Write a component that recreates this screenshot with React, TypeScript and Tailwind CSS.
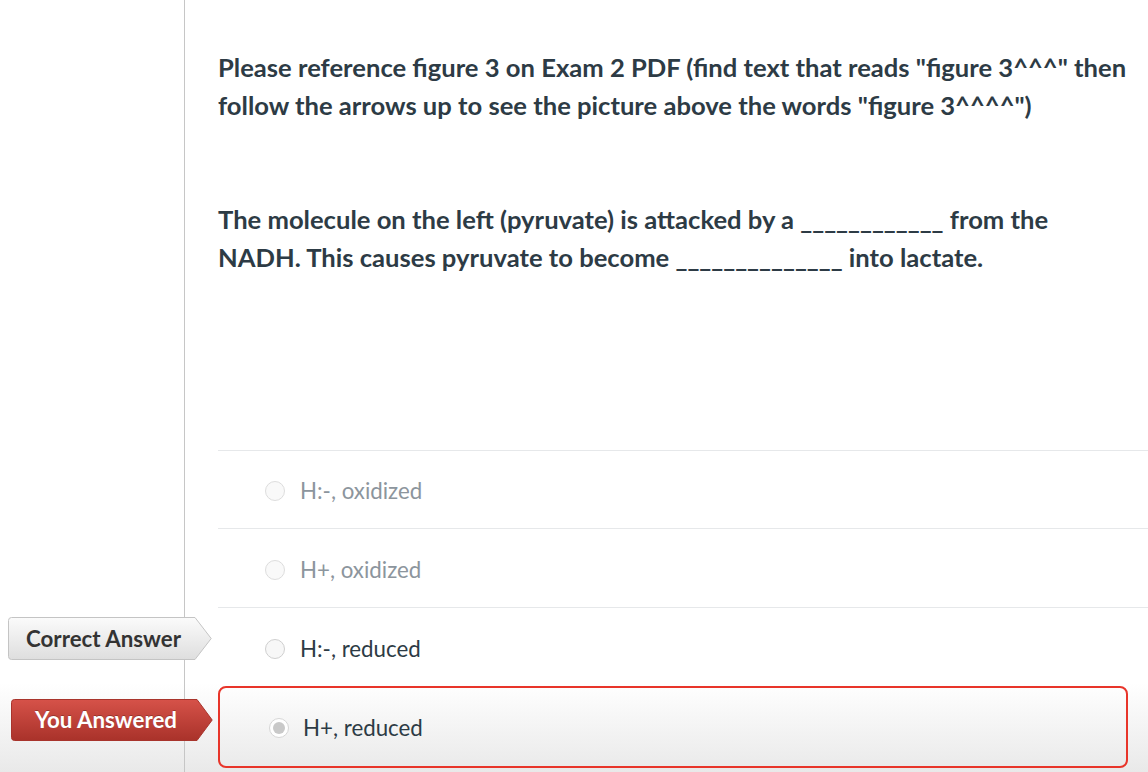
import React from "react";

const font = { fontFamily: "Lato, 'Noto Sans', 'Liberation Sans', sans-serif" };

function Radio({ faded }: { faded?: boolean }) {
  return (
    <div
      className={`w-[20px] h-[20px] rounded-full border border-[#cfcfcf] bg-[#f7f7f7] shrink-0 ${faded ? "opacity-70" : ""}`}
    />
  );
}

function Label({
  text,
  variant,
}: {
  text: string;
  variant: "correct" | "wrong";
}) {
  const correct = variant === "correct";
  const w = correct ? 204 : 202;
  const h = correct ? 43 : 42;
  const body = correct ? 187 : 186;
  const id = correct ? "gc" : "gw";
  return (
    <div className="relative" style={{ width: w, height: h }}>
      <svg width={w} height={h} className="absolute inset-0" viewBox={`0 0 ${w} ${h}`}>
        <defs>
          <linearGradient id={id} x1="0" y1="0" x2="0" y2="1">
            {correct ? (
              <>
                <stop offset="0" stopColor="#fbfbfb" />
                <stop offset="1" stopColor="#dedede" />
              </>
            ) : (
              <>
                <stop offset="0" stopColor="#d65249" />
                <stop offset="1" stopColor="#a9322a" />
              </>
            )}
          </linearGradient>
        </defs>
        <path
          d={`M3.5 0.5 L${body} 0.5 L${w - 0.8} ${h / 2} L${body} ${h - 0.5} L3.5 ${h - 0.5} Q0.5 ${h - 0.5} 0.5 ${h - 3.5} L0.5 3.5 Q0.5 0.5 3.5 0.5 Z`}
          fill={`url(#${id})`}
          stroke={correct ? "#c4c4c4" : "#a8342c"}
          strokeWidth="1"
        />
      </svg>
      <div
        className={`relative flex items-center h-full text-[22.3px] font-bold ${correct ? "text-[#333333] pl-[18px]" : "text-white pl-[24px] [text-shadow:0_-1px_0_rgba(0,0,0,0.25)]"}`}
        style={font}
      >
        {text}
      </div>
    </div>
  );
}

export default function App() {
  return (
    <div className="w-[1148px] h-[772px] bg-white overflow-hidden text-[#2d3b45]" style={font}>
      {/* Question */}
      <div className="flex h-[450px]">
        <div className="w-[185px] shrink-0 border-r border-[#c6c6c6]" />
        <div className="flex-1 pl-[33px] pt-[49px] text-[25.6px] font-bold leading-[37.5px]">
          <p className="whitespace-nowrap">
            Please reference figure 3 on Exam 2 PDF (find text that reads "figure 3^^^" then
            <br />
            follow the arrows up to see the picture above the words "figure 3^^^^")
          </p>
          <p className="whitespace-nowrap mt-[77px]">
            The molecule on the left (pyruvate) is attacked by a ____________ from the
            <br />
            NADH. This causes pyruvate to become ______________ into lactate.
          </p>
        </div>
      </div>

      {/* Answer 1 */}
      <div className="flex h-[78px]">
        <div className="w-[185px] shrink-0 border-r border-[#c6c6c6]" />
        <div className="flex-1 ml-[33px] border-t border-[#e6e8ea] flex items-start pl-[47px] pt-[30px] gap-[15px]">
          <Radio faded />
          <span className="text-[22.3px] leading-[26px] -mt-[3px] text-[#8c959d]">H:-, oxidized</span>
        </div>
      </div>

      {/* Answer 2 */}
      <div className="flex h-[79px]">
        <div className="w-[185px] shrink-0 border-r border-[#c6c6c6]" />
        <div className="flex-1 ml-[33px] border-t border-[#e6e8ea] flex items-start pl-[47px] pt-[31px] gap-[15px]">
          <Radio faded />
          <span className="text-[22.3px] leading-[26px] -mt-[3px] text-[#8c959d]">H+, oxidized</span>
        </div>
      </div>

      {/* Answer 3 - correct */}
      <div className="flex h-[76px]">
        <div className="w-[185px] shrink-0 border-r border-[#c6c6c6] pt-[10px] pl-[8px]">
          <Label text="Correct Answer" variant="correct" />
        </div>
        <div className="flex-1 ml-[33px] border-t border-[#e6e8ea] flex items-start pl-[47px] pt-[31px] gap-[15px]">
          <Radio />
          <span className="text-[22.3px] leading-[26px] -mt-[3px] text-[#2d3b45]">H:-, reduced</span>
        </div>
      </div>

      {/* Answer 4 - you answered */}
      <div className="flex h-[89px] bg-gradient-to-b from-white to-[#e9e9e9]">
        <div className="w-[185px] shrink-0 border-r border-[#c6c6c6] pt-[16px] pl-[11px]">
          <Label text="You Answered" variant="wrong" />
        </div>
        <div className="flex-1 ml-[33px] mr-[20px] pt-[3px]">
          <div className="h-[82px] rounded-[8px] border-2 border-[#e8352a] flex items-start pl-[49px] pt-[30px] gap-[14px]">
            <div className="w-[20px] h-[20px] rounded-full border border-[#d6d6d6] bg-white flex items-center justify-center shrink-0">
              <div className="w-[12px] h-[12px] rounded-full bg-[#c9c9c9]" />
            </div>
            <span className="text-[22.3px] leading-[26px] -mt-[3px] text-[#2d3b45]">H+, reduced</span>
          </div>
        </div>
      </div>
    </div>
  );
}
